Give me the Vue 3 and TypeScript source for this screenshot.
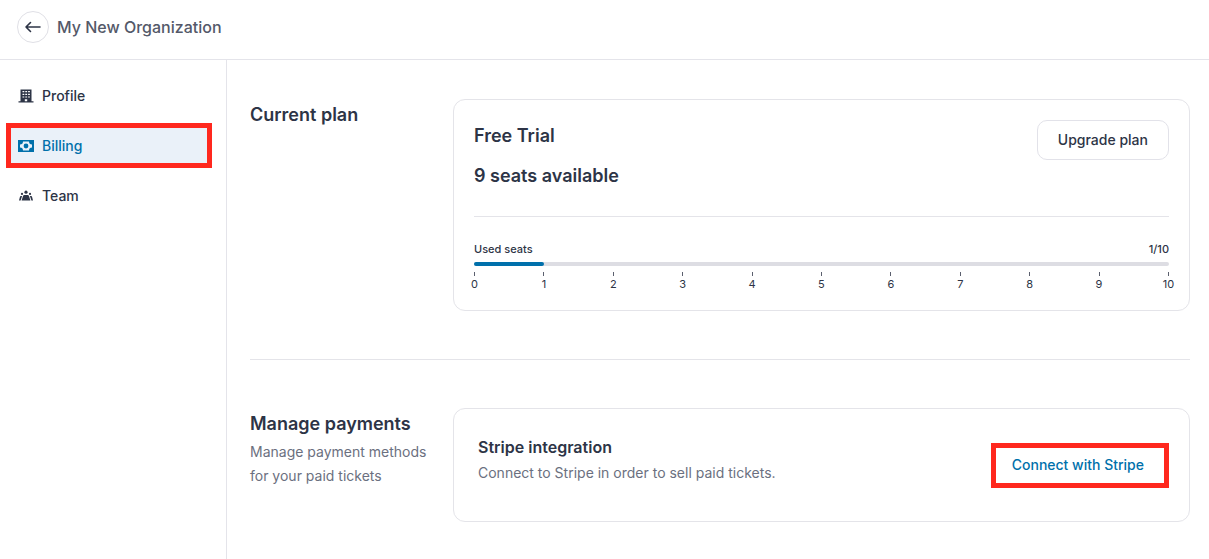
<script setup lang="ts">
interface NavItem {
  id: string
  label: string
}

const navItems: NavItem[] = [
  { id: 'profile', label: 'Profile' },
  { id: 'billing', label: 'Billing' },
  { id: 'team', label: 'Team' },
]
const activeItem = 'billing'

const totalSeats = 10
const usedSeats = 1
const ticks: number[] = Array.from({ length: totalSeats + 1 }, (_, i) => i)
</script>

<template>
  <div class="page">
    <header class="topbar">
      <button class="back" type="button" aria-label="Back">
        <svg width="18" height="18" viewBox="0 0 18 18" fill="none" stroke="currentColor" stroke-width="1.6" stroke-linecap="round" stroke-linejoin="round">
          <path d="M16 9H2M6.500 4.500L2 9l4.500 4.500" />
        </svg>
      </button>
      <h1 class="org">My New Organization</h1>
    </header>

    <div class="body">
      <nav class="sidebar" aria-label="Organization settings">
        <a
          v-for="item in navItems"
          :key="item.id"
          :href="'#' + item.id"
          class="nav-item"
          :class="{ active: item.id === activeItem }"
          :aria-current="item.id === activeItem ? 'page' : undefined"
        >
          <svg v-if="item.id === 'profile'" class="icon" viewBox="0 0 16 16" fill="currentColor" fill-rule="evenodd">
            <path d="M2.500 1.500h11v11.700h2v1.300H.5v-1.300h2zM4.500 3v1.200h1.800V3zM7.300 3v1.200h1.800V3zM10.100 3v1.200h1.800V3zM4.500 5.700v1.200h1.800V5.700zM7.300 5.700v1.200h1.800V5.700zM10.100 5.700v1.200h1.800V5.700zM4.500 8.400v1.200h1.800V8.400zM7.300 8.400v1.200h1.800V8.400zM10.100 8.400v1.200h1.800V8.400zM6.800 11.300v1.900h2.400v-1.900z" />
          </svg>
          <svg v-else-if="item.id === 'billing'" class="icon" viewBox="0 0 16 16" fill="currentColor" fill-rule="evenodd">
            <path d="M0 2h16v12H0zM5 3.500A3 3 0 0 1 2 6.500v3A3 3 0 0 1 5 12.500h6a3 3 0 0 1 3-3v-3A3 3 0 0 1 11 3.500zM8 5.600a2.400 2.400 0 1 1 0 4.800 2.400 2.400 0 0 1 0-4.800z" />
          </svg>
          <svg v-else class="icon" viewBox="0 0 16 16" fill="currentColor">
            <circle cx="8" cy="4.200" r="1.600" />
            <circle cx="4" cy="5.900" r="1.100" />
            <circle cx="12" cy="5.900" r="1.100" />
            <path d="M6.300 6.900h3.400a1.300 1.300 0 0 1 1.200.9l1.500 4.700H3.600l1.500-4.700a1.300 1.300 0 0 1 1.200-.9zM2.900 8h1.200l-1.500 4.500H1L1.900 8.900Q2.100 8 2.900 8zM11.900 8h1.200q.8 0 1 .9l.9 3.600h-1.600z" />
          </svg>
          <span>{{ item.label }}</span>
        </a>
      </nav>

      <main class="content">
        <section class="section">
          <div class="intro">
            <h2>Current plan</h2>
          </div>
          <div class="card plan">
            <div class="plan-head">
              <div>
                <h3 class="plan-line">Free Trial</h3>
                <p class="plan-line">{{ totalSeats - usedSeats }} seats available</p>
              </div>
              <button class="upgrade" type="button">Upgrade plan</button>
            </div>
            <div class="usage">
              <div class="usage-labels">
                <span id="used-seats">Used seats</span>
                <span>{{ usedSeats }}/{{ totalSeats }}</span>
              </div>
              <div class="track" role="progressbar" aria-labelledby="used-seats" aria-valuemin="0" :aria-valuemax="totalSeats" :aria-valuenow="usedSeats">
                <div class="fill" :style="{ width: (usedSeats / totalSeats) * 100 + '%' }"></div>
              </div>
              <div class="scale">
                <span v-for="tick in ticks" :key="tick" class="tick">{{ tick }}</span>
              </div>
            </div>
          </div>
        </section>

        <hr class="divider" />

        <section class="section">
          <div class="intro">
            <h2>Manage payments</h2>
            <p>Manage payment methods for your paid tickets</p>
          </div>
          <div class="card integration">
            <div class="integration-text">
              <h3>Stripe integration</h3>
              <p>Connect to Stripe in order to sell paid tickets.</p>
            </div>
            <button class="connect" type="button">Connect with Stripe</button>
          </div>
        </section>
      </main>
    </div>
  </div>
</template>

<style>
body {
  margin: 0;
  background: #fff;
}
</style>

<style scoped>
.page {
  display: flex;
  flex-direction: column;
  min-height: 100vh;
  font-family: Inter, "Liberation Sans", sans-serif;
  font-size: 14px;
  line-height: 24px;
  color: #2d3446;
}
.page *,
.page {
  box-sizing: border-box;
}
h1,
h2,
h3,
p {
  margin: 0;
}
button {
  font: inherit;
  background: #fff;
  cursor: pointer;
}
.topbar {
  display: flex;
  align-items: center;
  gap: 8px;
  padding: 11px 17px 16px;
  border-bottom: 1px solid #e4e4ea;
}
.back {
  display: flex;
  align-items: center;
  justify-content: center;
  width: 32px;
  height: 32px;
  padding: 0;
  border: 1px solid #e0e0e6;
  border-radius: 50%;
  color: #2d3446;
}
.org {
  font-size: 16px;
  font-weight: 500;
  color: #545969;
}
.body {
  display: flex;
  flex: 1;
}
.sidebar {
  display: flex;
  flex-direction: column;
  gap: 5px;
  flex: none;
  width: 227px;
  padding: 13px 14px 13px 6px;
  border-right: 1px solid #e4e4ea;
}
.nav-item {
  display: flex;
  align-items: center;
  gap: 8px;
  height: 45px;
  padding: 0 7px;
  border: 5px solid transparent;
  font-weight: 500;
  color: #2d3446;
  text-decoration: none;
}
.nav-item.active {
  border-color: #ff281e;
  background: #eaf1f9;
  color: #0070ab;
}
.icon {
  width: 16px;
  height: 16px;
}
.content {
  flex: 1;
  min-width: 0;
  padding: 39px 19px 37px 23px;
}
.section {
  display: grid;
  grid-template-columns: 179px minmax(0, 1fr);
  gap: 24px;
}
.intro {
  padding-top: 4px;
}
h2 {
  font-size: 18px;
  font-weight: 600;
}
.intro p,
.integration p {
  color: #6b7080;
}
.intro p {
  padding-top: 4px;
}
.card {
  border: 1px solid #e4e4e9;
  border-radius: 12px;
}
.plan {
  padding: 20px 20px 18px;
}
.plan-head {
  display: flex;
  justify-content: space-between;
  align-items: flex-start;
  padding-bottom: 24px;
  border-bottom: 1px solid #e4e4e9;
}
.plan-line {
  font-size: 18px;
  font-weight: 600;
  line-height: 32px;
}
.plan-line + .plan-line {
  margin-top: 8px;
}
.upgrade {
  height: 40px;
  padding: 0 20px;
  border: 1px solid #e2e2e9;
  border-radius: 10px;
  font-weight: 500;
  color: #2d3446;
}
.usage {
  padding-top: 24px;
  font-size: 11px;
  line-height: 16px;
}
.usage-labels {
  display: flex;
  justify-content: space-between;
  font-weight: 500;
}
.track {
  height: 4px;
  margin-top: 5px;
  border-radius: 2px;
  background: #dddde3;
}
.fill {
  height: 100%;
  border-radius: 2px;
  background: #0070ab;
}
.scale {
  display: flex;
  justify-content: space-between;
  margin-top: 6px;
}
.tick {
  display: flex;
  flex-direction: column;
  align-items: center;
  width: 1px;
}
.tick::before {
  content: "";
  width: 1px;
  height: 4px;
  background: #5b606e;
}
.divider {
  height: 1px;
  margin: 48px 0;
  border: 0;
  background: #e4e4e9;
}
.integration {
  display: flex;
  justify-content: space-between;
  align-items: center;
  min-height: 114px;
  padding: 26px 20px 26px 24px;
}
.integration-text {
  align-self: flex-start;
}
.integration-text p {
  margin-top: 2px;
}
h3 {
  font-size: 16px;
  font-weight: 600;
}
.connect {
  height: 45px;
  padding: 0 20px 0 16px;
  border: 5px solid #ff281e;
  font-weight: 500;
  color: #0070ab;
}
</style>
